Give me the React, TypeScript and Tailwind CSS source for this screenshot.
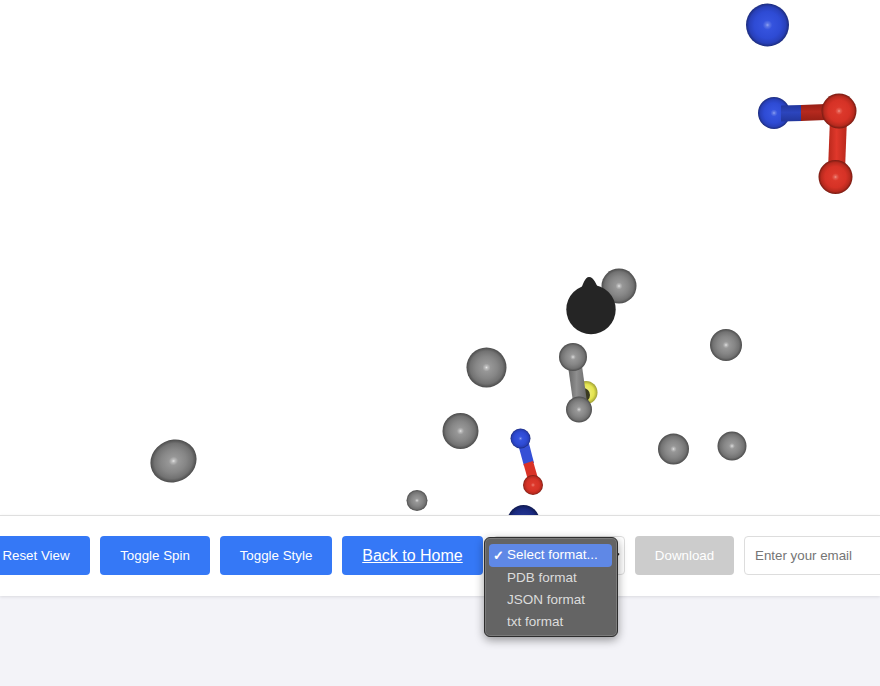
const GREY = "url(#grey)";

type Ball = { x: number; y: number; r: number; fill: string; rx?: number; rot?: number };

const balls: Ball[] = [
  { x: 767.5, y: 25, r: 21.5, fill: "url(#blue)" },
  { x: 619, y: 286, r: 17.5, fill: GREY },
  { x: 486.5, y: 367.5, r: 20, fill: GREY },
  { x: 726, y: 345, r: 16, fill: GREY },
  { x: 460.5, y: 431, r: 18, fill: GREY },
  { x: 673.5, y: 449, r: 15.5, fill: GREY },
  { x: 732, y: 446, r: 14.5, fill: GREY },
  { x: 417, y: 500.5, r: 10.5, fill: GREY },
  { x: 173.5, y: 461, r: 21, rx: 23.5, rot: -25, fill: GREY },
  { x: 523.5, y: 521, r: 16, fill: "url(#navy)" },
];

function Sphere({ x, y, r, fill, rx, rot }: Ball) {
  return (
    <ellipse
      cx={x}
      cy={y}
      rx={rx ?? r}
      ry={r}
      fill={fill}
      transform={rot ? `rotate(${rot} ${x} ${y})` : undefined}
    />
  );
}

function Molecule() {
  return (
    <svg width="880" height="515" viewBox="0 0 880 515" className="block">
      <defs>
        <radialGradient id="grey">
          <stop offset="0" stopColor="#e6e6e6" />
          <stop offset="0.07" stopColor="#bdbdbd" />
          <stop offset="0.2" stopColor="#979797" />
          <stop offset="0.55" stopColor="#868686" />
          <stop offset="0.82" stopColor="#727272" />
          <stop offset="1" stopColor="#4c4c4c" />
        </radialGradient>
        <radialGradient id="blue">
          <stop offset="0" stopColor="#93a5f2" />
          <stop offset="0.08" stopColor="#5f78e6" />
          <stop offset="0.22" stopColor="#3553de" />
          <stop offset="0.62" stopColor="#2e4bd4" />
          <stop offset="0.85" stopColor="#2840ba" />
          <stop offset="1" stopColor="#1c2c7c" />
        </radialGradient>
        <radialGradient id="navy">
          <stop offset="0" stopColor="#2a3c9c" />
          <stop offset="0.75" stopColor="#1a2a80" />
          <stop offset="1" stopColor="#101a50" />
        </radialGradient>
        <radialGradient id="red">
          <stop offset="0" stopColor="#f0968c" />
          <stop offset="0.08" stopColor="#e65f52" />
          <stop offset="0.22" stopColor="#dc382b" />
          <stop offset="0.62" stopColor="#d63226" />
          <stop offset="0.85" stopColor="#b82a1e" />
          <stop offset="1" stopColor="#761b12" />
        </radialGradient>
        <radialGradient id="yellow">
          <stop offset="0" stopColor="#f2f28c" />
          <stop offset="0.7" stopColor="#e4e44e" />
          <stop offset="1" stopColor="#a0a036" />
        </radialGradient>
        <linearGradient id="stickV" x1="0" y1="0" x2="1" y2="0">
          <stop offset="0" stopColor="#666666" />
          <stop offset="0.45" stopColor="#8f8f8f" />
          <stop offset="1" stopColor="#686868" />
        </linearGradient>
        <linearGradient id="stickH" x1="0" y1="0" x2="0" y2="1">
          <stop offset="0" stopColor="#22369c" />
          <stop offset="0.45" stopColor="#2c45bd" />
          <stop offset="1" stopColor="#22369c" />
        </linearGradient>
        <linearGradient id="stickHR" x1="0" y1="0" x2="0" y2="1">
          <stop offset="0" stopColor="#961f15" />
          <stop offset="0.45" stopColor="#b5291e" />
          <stop offset="1" stopColor="#961f15" />
        </linearGradient>
        <linearGradient id="stickR" x1="0" y1="0" x2="1" y2="0">
          <stop offset="0" stopColor="#b8281c" />
          <stop offset="0.45" stopColor="#e0382b" />
          <stop offset="1" stopColor="#b8281c" />
        </linearGradient>
      </defs>

      {balls.map((b, i) => (
        <Sphere key={i} {...b} />
      ))}

      {/* blue – red – red chain */}
      <Sphere x={774} y={113} r={16} fill="url(#blue)" />
      <polygon points="781,105.5 802,105 802,121 781,121.5" fill="url(#stickH)" />
      <polygon points="801,105 826,104 826,120 801,121" fill="url(#stickHR)" />
      <polygon points="830,118 847,118 845,170 828,170" fill="url(#stickR)" />
      <Sphere x={835.5} y={177} r={17} fill="url(#red)" />
      <Sphere x={839} y={111} r={17.5} fill="url(#red)" />

      {/* black atom */}
      <path d="M580 292 C583 284 585 277 589 277 C594 277 596 284 600 292 Z" fill="#252525" />
      <circle cx="591" cy="309.5" r="24.7" fill="#252525" />

      {/* yellow atom behind grey pair */}
      <circle cx="586" cy="392.5" r="11.5" fill="url(#yellow)" />
      <circle cx="583" cy="395" r="7" fill="#3a3a20" />

      {/* grey pair */}
      <polygon points="568,366 582,366 587,402 573,402" fill="url(#stickV)" />
      <Sphere x={573} y={357} r={14} fill={GREY} />
      <Sphere x={579} y={409.5} r={13} fill={GREY} />

      {/* blue – red pair */}
      <polygon points="518.5,446 528.5,441.5 534,463 524,466" fill="#3550d6" />
      <polygon points="523.5,464 533,461 538.5,480 528.5,482" fill="#d93226" />
      <Sphere x={520.5} y={438.5} r={10} fill="url(#blue)" />
      <Sphere x={533} y={485} r={10} fill="url(#red)" />
    </svg>
  );
}

function Btn({ children, w, extra = "" }: { children: React.ReactNode; w: string; extra?: string }) {
  return (
    <button className={`${w} ${extra} h-[39px] shrink-0 rounded-[4px] bg-[#3578f6] pt-px text-center text-[13.33px] text-white`}>
      {children}
    </button>
  );
}

export default function App() {
  return (
    <div
      className="relative h-[686px] w-[880px] overflow-hidden bg-[#f3f3f8]"
      style={{ fontFamily: '"Liberation Sans", Arial, sans-serif' }}
    >
      <div className="h-[515px] overflow-hidden bg-white">
        <Molecule />
      </div>

      <div className="flex h-[81px] items-center gap-[10px] border-t border-[#dfdfdf] bg-white pb-[2px] pl-0 shadow-[0_1px_3px_rgba(0,0,0,0.1)]">
        <div className="-ml-[20px] flex shrink-0 items-center gap-[10px]">
          <Btn w="w-[110px]" extra="pl-[2px]">Reset View</Btn>
          <Btn w="w-[110px]">Toggle Spin</Btn>
          <Btn w="w-[112px]">Toggle Style</Btn>
          <Btn w="w-[141px]">
            <span className="text-[16px] underline">Back to Home</span>
          </Btn>
          <div className="flex h-[39px] w-[132px] shrink-0 items-center justify-end rounded-[4px] border border-[#dddddd] bg-white pr-[4px]">
            <svg width="8" height="8" viewBox="0 0 8 8">
              <path d="M1 2.5 L4 6 L7 2.5" fill="none" stroke="#222222" strokeWidth="1.6" />
            </svg>
          </div>
          <button className="h-[39px] w-[99px] shrink-0 rounded-[4px] bg-[#cccccc] pt-px text-center text-[13.33px] text-white">
            Download
          </button>
          <input
            placeholder="Enter your email"
            className="h-[39px] w-[200px] shrink-0 rounded-[4px] border border-[#dddddd] bg-white px-[10px] text-[13.33px] text-[#222222] placeholder:text-[#757575]"
          />
        </div>
      </div>

      <div className="absolute left-[484px] top-[537px] flex h-[100px] w-[134px] flex-col rounded-[6px] border border-[#2e2e2e] bg-[#646464] pl-[4px] pr-[5px] pt-[6px] text-[13.5px] text-[#dcdcdc] shadow-[0_3px_10px_rgba(0,0,0,0.4),inset_0_0_0_1px_rgba(255,255,255,0.15)]">
        <div className="relative flex h-[23px] items-center rounded-[4px] bg-[#5f88e6] pl-[18px] text-white">
          <span className="absolute left-[4px] text-[13px] font-bold">✓</span>
          Select format...
        </div>
        <div className="flex h-[22px] items-center pl-[18px]">PDB format</div>
        <div className="flex h-[22px] items-center pl-[18px]">JSON format</div>
        <div className="flex h-[22px] items-center pl-[18px]">txt format</div>
      </div>
    </div>
  );
}
